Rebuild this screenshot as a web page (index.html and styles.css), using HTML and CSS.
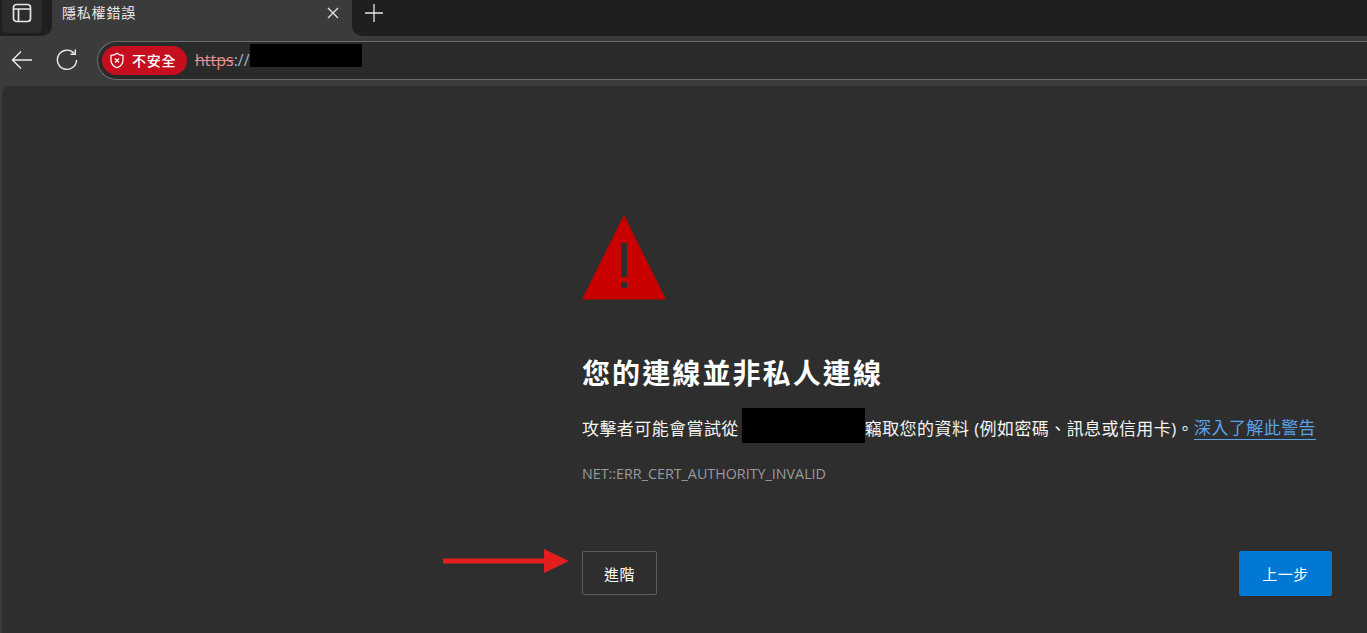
FILE: index.html
```html
<!DOCTYPE html>
<html lang="zh-Hant">
<head>
  <meta charset="UTF-8" />
  <title>隱私權錯誤</title>
  <link rel="stylesheet" href="styles.css">
</head>
<body>

  <!-- Tab strip -->
  <div class="tab-strip">
    <div class="strip-left">
      <div class="tab-actions">
        <svg width="20" height="20" viewBox="0 0 20 20" fill="none" stroke="#e6e6e6" stroke-width="1.7">
          <rect x="1.5" y="1.5" width="17" height="17" rx="3"/>
          <path d="M2 6H18M6.5 6V18" />
        </svg>
      </div>
    </div>
    <div class="tab">
      <span class="tab-title">隱私權錯誤</span>
      <svg class="tab-close" width="12" height="12" viewBox="0 0 12 12" stroke="#e6e6e6" stroke-width="1.3">
        <path d="M1 1L11 11M11 1L1 11"/>
      </svg>
    </div>
    <div class="strip-right">
      <svg class="new-tab" width="18" height="18" viewBox="0 0 18 18" stroke="#e6e6e6" stroke-width="1.3">
        <path d="M9 0V18M0 9H18"/>
      </svg>
    </div>
  </div>

  <!-- Toolbar -->
  <div class="toolbar">
    <svg class="nav-icon" width="22" height="20" viewBox="0 0 22 20" fill="none" stroke="#ededed" stroke-width="1.4">
      <path d="M21 10H1.5M10 1.5L1.5 10L10 18.5"/>
    </svg>
    <svg class="nav-icon reload" width="22" height="22" viewBox="0 0 22 22" fill="none" stroke="#ededed" stroke-width="1.4">
      <path d="M18 4.2A9.6 9.6 0 1 0 20.6 11"/>
      <path d="M19.3 0.5V5.3H14.5"/>
    </svg>
    <div class="address-bar">
      <div class="badge">
        <svg width="16" height="17" viewBox="0 0 16 17" fill="none" stroke="#fff" stroke-width="1.2">
          <path d="M8 1.2C9.8 2.6 11.8 3.3 14 3.4V8C14 11.6 11.8 14.3 8 15.8C4.2 14.3 2 11.6 2 8V3.4C4.2 3.3 6.2 2.6 8 1.2Z"/>
          <path d="M6 6.5L10 10.5M10 6.5L6 10.5"/>
        </svg>
        <span class="badge-text">不安全</span>
      </div>
      <span class="url"><s class="scheme">https</s>://</span>
      <span class="url-mask"></span>
    </div>
  </div>

  <!-- Error page -->
  <div class="page">
    <div class="error">
      <svg class="warn" width="84" height="85" viewBox="0 0 84 85">
        <path fill="#c80000" d="M42 0L84 84.5H0Z"/>
        <path fill="#2e2e2e" d="M39 28H45V62H39ZM39 67H45V73H39Z"/>
      </svg>
      <h1>您的連線並非私人連線</h1>
      <p class="message">攻擊者可能會嘗試從<span class="host-mask"></span>竊取您的資料 (例如密碼、訊息或信用卡)。<a href="#">深入了解此警告</a></p>
      <p class="code">NET::ERR_CERT_AUTHORITY_INVALID</p>
      <div class="buttons">
        <div class="advanced-wrap">
          <svg class="arrow" width="126" height="26" viewBox="0 0 126 26">
            <path fill="#e41e1e" d="M0 10.5H101V1L126 13L101 25V15.5H0Z"/>
          </svg>
          <button type="button" class="btn-advanced">進階</button>
        </div>
        <button type="button" class="btn-back">上一步</button>
      </div>
    </div>
  </div>

</body>
</html>
```

FILE: styles.css
```css
* {
  margin: 0;
  padding: 0;
  box-sizing: border-box;
}

html,
body {
  height: 633px;
  overflow: hidden;
}

body {
  display: flex;
  flex-direction: column;
  background: #3b3b3b;
  color: #fff;
  font-family: "Open Sans", "Noto Sans CJK TC", sans-serif;
}

.tab-strip {
  display: flex;
  height: 36px;
  flex-shrink: 0;
}

.strip-left {
  width: 52px;
  padding: 0 0 2px 2px;
  background: #1f1f1f;
  border-bottom-right-radius: 10px;
}

.tab-actions {
  display: flex;
  align-items: center;
  justify-content: center;
  width: 40px;
  height: 33px;
  padding-bottom: 7px;
  background: #2c2c2c;
  border-radius: 0 0 5px 5px;
}

.tab {
  display: flex;
  align-items: center;
  justify-content: space-between;
  width: 300px;
  padding: 0 13px 10px 10px;
}

.tab-title {
  margin-top: -2px;
  font-size: 14px;
  letter-spacing: 0.8px;
  color: #e8e8e8;
}

.strip-right {
  flex: 1;
  padding: 4px 0 0 13px;
  background: #1f1f1f;
  border-bottom-left-radius: 10px;
}

.toolbar {
  display: flex;
  align-items: center;
  height: 50px;
  flex-shrink: 0;
  padding: 0 0 2px 11px;
}

.nav-icon {
  margin-right: 23px;
}

.reload {
  margin-right: 19px;
}

.address-bar {
  display: flex;
  align-items: center;
  flex: 1;
  height: 39px;
  padding-left: 4px;
  background: #2a2a2a;
  border: 1.5px solid #6b6b6b;
  border-right: none;
  border-radius: 20px 0 0 20px;
}

.badge {
  display: flex;
  align-items: center;
  width: 85px;
  height: 29px;
  padding-left: 7px;
  background: #c50f1f;
  border-radius: 15px;
}

.badge-text {
  margin: -1px 0 0 7px;
  font-size: 14px;
  font-weight: 500;
  letter-spacing: 0.8px;
}

.url {
  margin-left: 8px;
  font-size: 16px;
  color: #9fb4c6;
}

.scheme {
  color: #e58f8f;
}

.url-mask {
  width: 112px;
  height: 23px;
  margin: -9px 0 0 0;
  background: #000;
}

.page {
  flex: 1;
  margin-left: 2px;
  padding: 129px 0 0 580px;
  background: #2e2e2e;
  border-top-left-radius: 8px;
}

.error {
  width: 750px;
}

.warn {
  display: block;
}

h1 {
  margin-top: 53px;
  font-size: 28px;
  font-weight: 700;
  line-height: 40px;
  letter-spacing: 2.1px;
}

.message {
  display: flex;
  align-items: center;
  white-space: nowrap;
  margin-top: 15px;
  font-size: 17px;
  line-height: 35px;
  letter-spacing: 0.42px;
  color: #f5f5f5;
}

.message a {
  color: #5ba3e6;
  line-height: 22px;
  border-bottom: 1px solid #5ba3e6;
  text-decoration: none;
}

.host-mask {
  width: 123px;
  height: 35px;
  margin: 0 0 5px 3px;
  background: #000;
}

.code {
  margin-top: 16px;
  font-size: 14.3px;
  line-height: 20px;
  color: #9a9a9a;
}

.buttons {
  display: flex;
  justify-content: space-between;
  margin-top: 67px;
}

.advanced-wrap {
  position: relative;
}

.arrow {
  position: absolute;
  left: -139px;
  top: -3px;
}

button {
  height: 44px;
  color: #fff;
  font-family: inherit;
  font-size: 15px;
  letter-spacing: 0.5px;
  border-radius: 2px;
}

.btn-advanced {
  width: 75px;
  background: transparent;
  border: 1px solid #5c5c5c;
}

.btn-back {
  width: 93px;
  height: 45px;
  background: #0078d4;
  border: none;
}
```
